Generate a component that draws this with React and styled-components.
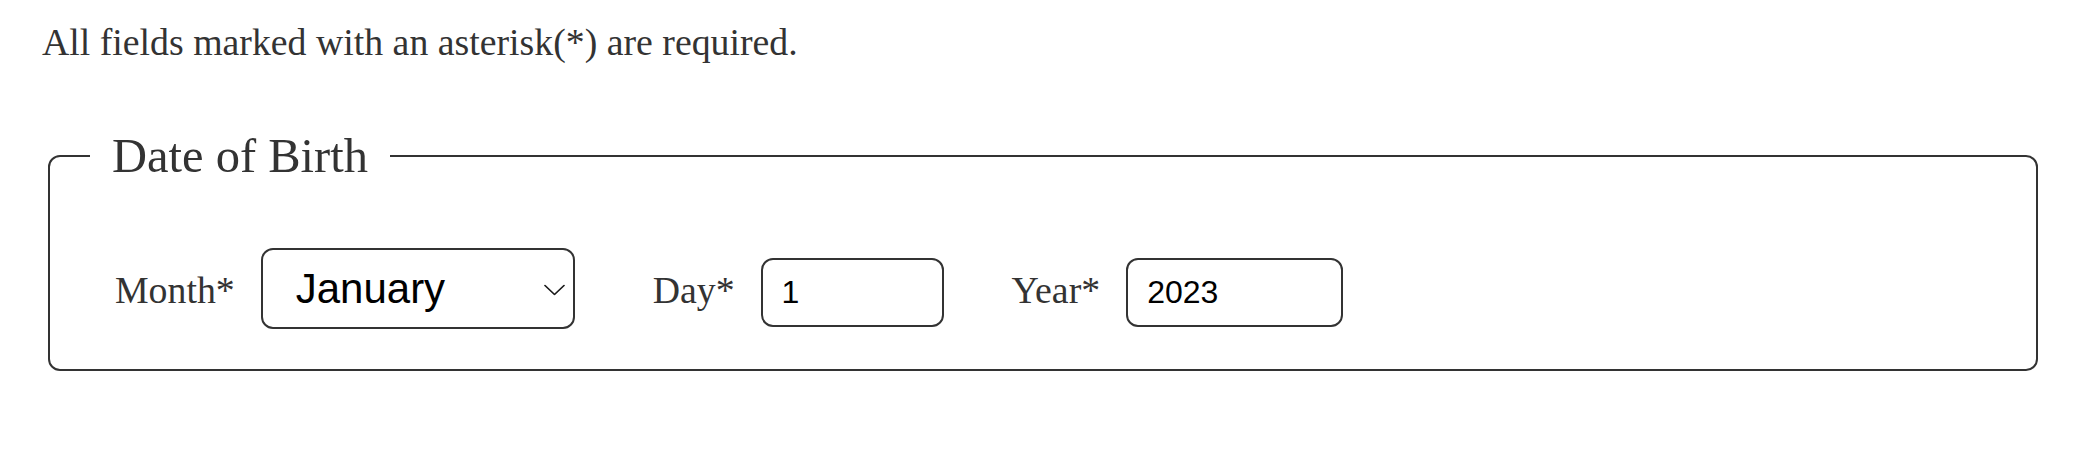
import React from "react";
import styled, { createGlobalStyle } from "styled-components";

const GlobalStyle = createGlobalStyle`
  html, body {
    margin: 0;
    padding: 0;
    background: #ffffff;
  }
  body {
    font-family: "Liberation Serif", "Times New Roman", serif;
    color: #333333;
  }
  * { box-sizing: border-box; }
`;

const Page = styled.main`
  padding: 20px 53px 0 42px;
`;

const Notice = styled.p`
  margin: 0;
  font-size: 37.8px;
  line-height: normal;
  color: #333333;
`;

const Fieldset = styled.fieldset`
  margin: 64px 0 0 6px;
  padding: 65px 0 40px 40px;
  border: 2px solid #333333;
  border-radius: 12px;
  min-width: 0;
`;

const Legend = styled.legend`
  padding: 0 22px;
  font-size: 48.5px;
  line-height: normal;
  color: #333333;
`;

const Row = styled.div`
  display: flex;
  align-items: baseline;
  margin-left: 25px;
`;

const Field = styled.div`
  display: flex;
  align-items: baseline;
  gap: 26px;
  margin-right: ${(p) => p.$space || 0}px;
`;

const Label = styled.label`
  font-size: 37.8px;
  line-height: normal;
  color: #333333;
  white-space: nowrap;
`;

const SelectWrap = styled.div`
  position: relative;
  display: inline-flex;
`;

const Select = styled.select`
  appearance: none;
  -webkit-appearance: none;
  width: ${(p) => p.$width}px;
  height: 81px;
  padding: 0 40px 0 33px;
  border: 2px solid #333333;
  border-radius: 12px;
  background: #ffffff;
  color: #000000;
  font-family: "Liberation Sans", Arial, sans-serif;
  font-size: 42px;
  outline: none;
`;

const Chevron = styled.svg`
  position: absolute;
  right: 10px;
  top: calc(50% + 1.5px);
  transform: translateY(-50%);
  pointer-events: none;
`;

const Input = styled.input`
  width: ${(p) => p.$width}px;
  height: 69px;
  padding: 0 19px;
  border: 2px solid #333333;
  border-radius: 12px;
  background: #ffffff;
  color: #000000;
  font-family: "Liberation Sans", Arial, sans-serif;
  font-size: 32px;
  outline: none;
`;

const months = [
  "January", "February", "March", "April", "May", "June",
  "July", "August", "September", "October", "November", "December",
];

export default function App() {
  return (
    <>
      <GlobalStyle />
      <Page>
        <Notice>All fields marked with an asterisk(*) are required.</Notice>
        <Fieldset>
          <Legend>Date of Birth</Legend>
          <Row>
            <Field $space={78}>
              <Label htmlFor="month">Month*</Label>
              <SelectWrap>
                <Select id="month" $width={314} defaultValue="January">
                  {months.map((m) => (
                    <option key={m} value={m}>{m}</option>
                  ))}
                </Select>
                <Chevron width="21" height="11" viewBox="0 0 21 11" aria-hidden="true">
                  <polyline
                    points="1,1 10.5,10 20,1"
                    fill="none"
                    stroke="#1a1a1a"
                    strokeWidth="1.7"
                    strokeLinecap="round"
                    strokeLinejoin="round"
                  />
                </Chevron>
              </SelectWrap>
            </Field>
            <Field $space={68}>
              <Label htmlFor="day">Day*</Label>
              <Input id="day" type="text" $width={183} defaultValue="1" />
            </Field>
            <Field>
              <Label htmlFor="year">Year*</Label>
              <Input id="year" type="text" $width={217} defaultValue="2023" />
            </Field>
          </Row>
        </Fieldset>
      </Page>
    </>
  );
}
